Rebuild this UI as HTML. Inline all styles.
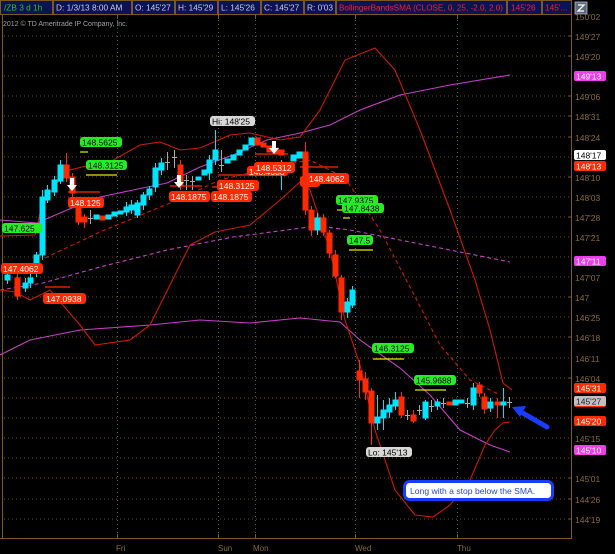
<!DOCTYPE html>
<html><head><meta charset="utf-8"><style>
html,body{margin:0;padding:0;background:#000;width:615px;height:554px;overflow:hidden}
svg{display:block}
text{font-family:"Liberation Sans",sans-serif}
</style></head><body>
<svg width="615" height="554" viewBox="0 0 615 554" xmlns="http://www.w3.org/2000/svg">
<rect width="615" height="554" fill="#000"/>
<g font-size="8.3" fill="#c8cce0">
<rect x="0.5" y="0.5" width="52" height="14" fill="#0b1256" stroke="#7a5a20"/>
<text x="4" y="10.5" fill="#1ec81e">/ZB 3 d 1h</text>
<rect x="53.5" y="0.5" width="78" height="14" fill="#0b1256" stroke="#7a5a20"/>
<text x="56" y="10.5">D: 1/3/13 8:00 AM</text>
<rect x="132.5" y="0.5" width="42" height="14" fill="#0b1256" stroke="#7a5a20"/>
<text x="135" y="10.5">O: 145'27</text>
<rect x="175.5" y="0.5" width="42" height="14" fill="#0b1256" stroke="#7a5a20"/>
<text x="178" y="10.5">H: 145'29</text>
<rect x="218.5" y="0.5" width="42" height="14" fill="#0b1256" stroke="#7a5a20"/>
<text x="221" y="10.5">L: 145'26</text>
<rect x="261.5" y="0.5" width="42" height="14" fill="#0b1256" stroke="#7a5a20"/>
<text x="264" y="10.5">C: 145'27</text>
<rect x="304.5" y="0.5" width="31" height="14" fill="#0b1256" stroke="#7a5a20"/>
<text x="307" y="10.5">R: 0'03</text>
<rect x="336.5" y="0.5" width="170" height="14" fill="#0b1256" stroke="#7a5a20"/>
<text x="339" y="10.5" fill="#ff2020" font-size="8" textLength="164" lengthAdjust="spacingAndGlyphs">BollingerBandsSMA (CLOSE, 0, 25, -2.0, 2.0)</text>
<rect x="507.5" y="0.5" width="34" height="14" fill="#0b1256" stroke="#7a5a20"/>
<text x="511" y="10.5" fill="#ff2020">145'26</text>
<rect x="542.5" y="0.5" width="29" height="14" fill="#0b1256" stroke="#7a5a20"/>
<text x="545" y="10.5" fill="#ff2020">145'...</text>
</g>
<rect x="575" y="2" width="12" height="12" fill="#5a6a7a" stroke="#aabbcc" stroke-width="0.8"/>
<path d="M578 5h6l-6 6h6" stroke="#fff" fill="none" stroke-width="1.3"/>
<text x="3" y="26" font-size="7" fill="#a0a0a0">2012 © TD Ameritrade IP Company, Inc.</text>
<line x1="2.5" y1="15" x2="2.5" y2="538" stroke="#7a5a20"/>
<line x1="571.5" y1="15" x2="571.5" y2="538" stroke="#7a5a20"/>
<line x1="0" y1="538.5" x2="572" y2="538.5" stroke="#7a5a20"/>
<g stroke="#6a5020" stroke-dasharray="1 3">
<line x1="4" y1="36" x2="570" y2="36"/><line x1="4" y1="56" x2="570" y2="56"/><line x1="4" y1="76" x2="570" y2="76"/><line x1="4" y1="96" x2="570" y2="96"/><line x1="4" y1="116" x2="570" y2="116"/><line x1="4" y1="137" x2="570" y2="137"/><line x1="4" y1="157" x2="570" y2="157"/><line x1="4" y1="177" x2="570" y2="177"/><line x1="4" y1="197" x2="570" y2="197"/><line x1="4" y1="217" x2="570" y2="217"/><line x1="4" y1="237" x2="570" y2="237"/><line x1="4" y1="257" x2="570" y2="257"/><line x1="4" y1="277" x2="570" y2="277"/><line x1="4" y1="297" x2="570" y2="297"/><line x1="4" y1="317" x2="570" y2="317"/><line x1="4" y1="337" x2="570" y2="337"/><line x1="4" y1="358" x2="570" y2="358"/><line x1="4" y1="378" x2="570" y2="378"/><line x1="4" y1="398" x2="570" y2="398"/><line x1="4" y1="418" x2="570" y2="418"/><line x1="4" y1="438" x2="570" y2="438"/><line x1="4" y1="458" x2="570" y2="458"/><line x1="4" y1="478" x2="570" y2="478"/><line x1="4" y1="499" x2="570" y2="499"/><line x1="4" y1="519" x2="570" y2="519"/>
</g>
<g stroke="#5a5a5a" stroke-dasharray="1 3">
<line x1="117.5" y1="16" x2="117.5" y2="538"/><line x1="218.5" y1="16" x2="218.5" y2="538"/><line x1="255.5" y1="16" x2="255.5" y2="538"/><line x1="355.5" y1="16" x2="355.5" y2="538"/><line x1="457.5" y1="16" x2="457.5" y2="538"/>
</g>
<g stroke="#7a5a20"><line x1="117.5" y1="15" x2="117.5" y2="19"/><line x1="218.5" y1="15" x2="218.5" y2="19"/><line x1="255.5" y1="15" x2="255.5" y2="19"/><line x1="355.5" y1="15" x2="355.5" y2="19"/><line x1="457.5" y1="15" x2="457.5" y2="19"/>
<line x1="117.5" y1="534" x2="117.5" y2="538"/><line x1="218.5" y1="534" x2="218.5" y2="538"/><line x1="255.5" y1="534" x2="255.5" y2="538"/><line x1="355.5" y1="534" x2="355.5" y2="538"/><line x1="457.5" y1="534" x2="457.5" y2="538"/></g>
<g font-size="8" fill="#8a6a30">
<text x="116" y="551">Fri</text><text x="218" y="551">Sun</text><text x="253" y="551">Mon</text><text x="355" y="551">Wed</text><text x="457" y="551">Thu</text>
</g>
<g font-size="8.5" fill="#8a6a30">
<text x="575" y="20">150'02</text><text x="575" y="40">149'27</text><text x="575" y="60">149'20</text><text x="575" y="100">149'06</text><text x="575" y="120">148'31</text><text x="575" y="141">148'24</text><text x="575" y="181">148'10</text><text x="575" y="201">148'03</text><text x="575" y="221">147'28</text><text x="575" y="241">147'21</text><text x="575" y="281">147'07</text><text x="575" y="301">147</text><text x="575" y="321">146'25</text><text x="575" y="341">146'18</text><text x="575" y="362">146'11</text><text x="575" y="382">146'04</text><text x="575" y="442">145'15</text><text x="575" y="482">145'01</text><text x="575" y="503">144'26</text><text x="575" y="523">144'19</text>
</g>
<g stroke="#7a5a20"><line x1="568" y1="36" x2="572" y2="36"/><line x1="568" y1="56" x2="572" y2="56"/><line x1="568" y1="96" x2="572" y2="96"/><line x1="568" y1="116" x2="572" y2="116"/><line x1="568" y1="137" x2="572" y2="137"/><line x1="568" y1="177" x2="572" y2="177"/><line x1="568" y1="217" x2="572" y2="217"/><line x1="568" y1="297" x2="572" y2="297"/><line x1="568" y1="337" x2="572" y2="337"/><line x1="568" y1="378" x2="572" y2="378"/><line x1="568" y1="478" x2="572" y2="478"/><line x1="568" y1="499" x2="572" y2="499"/><line x1="568" y1="519" x2="572" y2="519"/></g>
<g font-size="8.5">
<rect x="574" y="71" width="32" height="10" rx="2" fill="#f03cf0"/><text x="576" y="79.5" fill="#fff">149'13</text>
<rect x="574" y="150" width="32" height="10" rx="2" fill="#fff"/><text x="576" y="158.5" fill="#000">148'17</text>
<rect x="574" y="161" width="32" height="10" rx="2" fill="#ff2a00"/><text x="576" y="169.5" fill="#fff">148'13</text>
<rect x="574" y="256" width="32" height="10" rx="2" fill="#f03cf0"/><text x="576" y="264.5" fill="#fff">147'11</text>
<rect x="574" y="383" width="32" height="10" rx="2" fill="#ff2a00"/><text x="576" y="391.5" fill="#fff">145'31</text>
<rect x="574" y="396" width="32" height="11" rx="2" fill="#ff2a00"/><rect x="574" y="396" width="32" height="10" rx="2" fill="#c0c0c0"/><text x="576" y="404.5" fill="#222">145'27</text>
<rect x="574" y="416" width="32" height="10" rx="2" fill="#ff2a00"/><text x="576" y="424.5" fill="#fff">145'20</text>
<rect x="574" y="445" width="32" height="10" rx="2" fill="#f03cf0"/><text x="576" y="453.5" fill="#fff">145'10</text>
</g>
<g fill="none" stroke-width="1.1">
<polyline stroke="#c83cc8" points="0,220 37,223 67,210 100,197 133,190 167,183 200,167 233,155 267,140 300,133 330,125 360,110 400,95 450,85 510,75"/>
<polyline stroke="#c83cc8" points="0,355 30,340 80,330 150,325 200,320 250,323 300,318 340,322 360,340 400,368 430,395 460,430 490,445 510,452"/>
<polyline stroke="#c83cc8" stroke-dasharray="4 3" points="0,290 43,283 100,267 167,250 233,237 317,226 350,230 400,240 450,250 510,262"/>
<polyline stroke="#d01800" points="0,236 35,235 42,205 55,185 70,170 90,165 110,162 140,145 160,142 180,150 200,148 230,135 250,133 280,140 300,137 320,110 345,60 375,48 395,70 420,130 450,210 475,280 490,330 503,383 512,390"/>
<polyline stroke="#d01800" points="0,290 15,292 30,300 50,290 80,325 95,345 130,340 150,325 170,285 190,245 215,232 250,225 280,200 300,182 310,190 330,250 345,320 360,365 375,430 395,490 415,515 433,517 450,505 470,480 485,445 495,430 503,423 510,422"/>
<polyline stroke="#d01800" stroke-dasharray="4 3" points="45,258 100,232 170,203 220,180 280,165 310,160 345,178 380,230 410,287 440,345 470,380 500,395"/>
</g>
<g stroke-width="1">
<g stroke="#00e5ff" fill="#00e5ff">
<line x1="7.5" y1="270" x2="7.5" y2="284"/><rect x="5" y="275" width="5" height="5"/>
<line x1="25.5" y1="278" x2="25.5" y2="292"/><rect x="23" y="283" width="5" height="5"/>
<line x1="30.5" y1="274" x2="30.5" y2="288"/><rect x="28" y="278" width="5" height="5"/>
<line x1="36.5" y1="252" x2="36.5" y2="277"/><rect x="34" y="255" width="5" height="18"/>
<line x1="42.5" y1="190" x2="42.5" y2="260"/><rect x="40" y="197" width="5" height="58"/>
<line x1="47.5" y1="185" x2="47.5" y2="203"/><rect x="45" y="190" width="5" height="10"/>
<line x1="54.5" y1="176" x2="54.5" y2="196"/><rect x="52" y="180" width="5" height="12"/>
<line x1="60.5" y1="160" x2="60.5" y2="184"/><rect x="58" y="165" width="5" height="16"/>
<rect x="94" y="215" width="5" height="4"/><rect x="106" y="215" width="5" height="4"/><rect x="112" y="212" width="5" height="4"/><rect x="118" y="211" width="5" height="3"/>
<line x1="126.5" y1="202" x2="126.5" y2="216"/><rect x="124" y="207" width="5" height="5"/>
<line x1="131.5" y1="200" x2="131.5" y2="214"/><rect x="129" y="205" width="5" height="5"/>
<line x1="137.5" y1="200" x2="137.5" y2="218"/><rect x="135" y="203" width="5" height="12"/>
<line x1="143.5" y1="192" x2="143.5" y2="210"/><rect x="141" y="195" width="5" height="10"/>
<line x1="149.5" y1="186" x2="149.5" y2="200"/><rect x="147" y="189" width="5" height="6"/>
<line x1="155.5" y1="163" x2="155.5" y2="192"/><rect x="153" y="168" width="5" height="19"/>
<line x1="161.5" y1="158" x2="161.5" y2="175"/><rect x="159" y="163" width="5" height="7"/>
<rect x="196" y="177" width="5" height="3"/><rect x="202" y="170" width="5" height="5"/>
<line x1="209.5" y1="155" x2="209.5" y2="180"/><rect x="207" y="160" width="5" height="13"/>
<line x1="215.5" y1="130" x2="215.5" y2="165"/><rect x="213" y="150" width="5" height="10"/>
<rect x="225" y="159" width="5" height="4"/><rect x="231" y="155" width="5" height="5"/><rect x="237" y="150" width="5" height="5"/><rect x="243" y="145" width="5" height="5"/><rect x="249" y="138" width="5" height="7"/>
<line x1="281.5" y1="160" x2="281.5" y2="190"/>
<rect x="291" y="155" width="5" height="6"/><rect x="297" y="152" width="5" height="6"/>
<line x1="317.5" y1="213" x2="317.5" y2="235"/><rect x="315" y="218" width="5" height="12"/>
<line x1="347.5" y1="298" x2="347.5" y2="318"/><rect x="345" y="302" width="5" height="10"/>
<line x1="352.5" y1="286" x2="352.5" y2="308"/><rect x="350" y="290" width="5" height="15"/>
<line x1="377.5" y1="395" x2="377.5" y2="430"/><rect x="375" y="417" width="5" height="6"/>
<line x1="383.5" y1="400" x2="383.5" y2="430"/><rect x="381" y="410" width="5" height="8"/>
<line x1="389.5" y1="398" x2="389.5" y2="418"/><rect x="387" y="405" width="5" height="7"/>
<line x1="395.5" y1="392" x2="395.5" y2="410"/><rect x="393" y="400" width="5" height="6"/>
<line x1="425.5" y1="400" x2="425.5" y2="420"/><rect x="423" y="402" width="5" height="16"/>
<line x1="437.5" y1="399" x2="437.5" y2="410"/><rect x="435" y="402" width="5" height="4"/>
<rect x="453" y="400" width="5" height="5"/><rect x="459" y="400" width="5" height="3"/>
<line x1="473.5" y1="383" x2="473.5" y2="410"/><rect x="471" y="388" width="5" height="17"/>
<line x1="490.5" y1="398" x2="490.5" y2="412"/><rect x="488" y="402" width="5" height="6"/>
<line x1="503.5" y1="388" x2="503.5" y2="418"/><rect x="501" y="402" width="5" height="3"/>
</g>
<g stroke="#ff2a00" fill="#ff2a00">
<line x1="17.5" y1="274" x2="17.5" y2="300"/><rect x="15" y="278" width="5" height="18"/>
<line x1="66.5" y1="153" x2="66.5" y2="182"/><rect x="64" y="165" width="5" height="13"/>
<line x1="72.5" y1="173" x2="72.5" y2="198"/><rect x="70" y="177" width="5" height="16"/>
<line x1="78.5" y1="205" x2="78.5" y2="225"/><rect x="76" y="208" width="5" height="14"/>
<line x1="84.5" y1="214" x2="84.5" y2="228"/><rect x="82" y="217" width="5" height="5"/>
<rect x="100" y="216" width="5" height="4"/>
<line x1="180.5" y1="160" x2="180.5" y2="190"/><rect x="178" y="165" width="5" height="20"/>
<rect x="255" y="138" width="5" height="7"/><rect x="261" y="143" width="5" height="4"/><rect x="267" y="146" width="5" height="6"/><rect x="273" y="148" width="5" height="6"/><rect x="279" y="150" width="5" height="5"/>
<line x1="305.5" y1="142" x2="305.5" y2="215"/><rect x="303" y="152" width="5" height="58"/>
<line x1="311.5" y1="206" x2="311.5" y2="236"/><rect x="309" y="210" width="5" height="20"/>
<line x1="323.5" y1="214" x2="323.5" y2="236"/><rect x="321" y="218" width="5" height="14"/>
<line x1="329.5" y1="230" x2="329.5" y2="258"/><rect x="327" y="233" width="5" height="20"/>
<line x1="335.5" y1="250" x2="335.5" y2="278"/><rect x="333" y="255" width="5" height="21"/>
<line x1="341.5" y1="275" x2="341.5" y2="320"/><rect x="339" y="278" width="5" height="34"/>
<line x1="359.5" y1="360" x2="359.5" y2="398"/><rect x="357" y="371" width="5" height="9"/>
<line x1="365.5" y1="372" x2="365.5" y2="400"/><rect x="363" y="379" width="5" height="13"/>
<line x1="371.5" y1="388" x2="371.5" y2="445"/><rect x="369" y="391" width="5" height="32"/>
<line x1="401.5" y1="392" x2="401.5" y2="418"/><rect x="399" y="397" width="5" height="18"/>
<line x1="413.5" y1="410" x2="413.5" y2="423"/><rect x="411" y="415" width="5" height="6"/>
<rect x="447" y="402" width="5" height="3"/>
<line x1="479.5" y1="382" x2="479.5" y2="397"/><rect x="477" y="385" width="5" height="8"/>
<line x1="484.5" y1="393" x2="484.5" y2="414"/><rect x="482" y="397" width="5" height="12"/>
<line x1="497.5" y1="398" x2="497.5" y2="418"/><rect x="495" y="402" width="5" height="3"/>
</g>
<g stroke="#aaa" fill="#aaa">
<line x1="90.5" y1="210" x2="90.5" y2="224"/><line x1="88" y1="218.5" x2="93" y2="218.5"/>
<line x1="167.5" y1="152" x2="167.5" y2="170"/><line x1="165" y1="162.5" x2="170" y2="162.5"/>
<line x1="174.5" y1="150" x2="174.5" y2="168"/><line x1="172" y1="157.5" x2="177" y2="157.5"/>
<line x1="186.5" y1="175" x2="186.5" y2="190"/><line x1="184" y1="180.5" x2="189" y2="180.5"/>
<line x1="192.5" y1="176" x2="192.5" y2="190"/><line x1="190" y1="181.5" x2="195" y2="181.5"/>
<line x1="221.5" y1="150" x2="221.5" y2="172"/><line x1="219" y1="165.5" x2="224" y2="165.5"/>
<line x1="407.5" y1="410" x2="407.5" y2="420"/><line x1="405" y1="415.5" x2="410" y2="415.5"/>
<line x1="419.5" y1="405" x2="419.5" y2="415"/><line x1="417" y1="410.5" x2="422" y2="410.5"/>
<line x1="431.5" y1="400" x2="431.5" y2="412"/><line x1="429" y1="406.5" x2="434" y2="406.5"/>
<line x1="443.5" y1="398" x2="443.5" y2="408"/><line x1="441" y1="403.5" x2="446" y2="403.5"/>
<line x1="467.5" y1="398" x2="467.5" y2="408"/><line x1="465" y1="403.5" x2="470" y2="403.5"/>
<line x1="509.5" y1="397" x2="509.5" y2="408"/><line x1="507" y1="402.5" x2="512" y2="402.5"/>
</g>
</g>
<g stroke="#ff2a00" stroke-width="1.2">
<line x1="68" y1="192" x2="100" y2="192"/><line x1="45" y1="287" x2="70" y2="287"/><line x1="170" y1="186" x2="202" y2="186"/><line x1="212" y1="187" x2="243" y2="187"/><line x1="218" y1="175" x2="250" y2="175"/><line x1="255" y1="154" x2="288" y2="154"/><line x1="300" y1="167" x2="338" y2="167"/>
</g>
<g stroke="#e8e800" stroke-width="1.2">
<line x1="80" y1="152" x2="88" y2="152"/><line x1="86" y1="175" x2="117" y2="175"/><line x1="337" y1="210" x2="352" y2="210"/><line x1="343" y1="218" x2="350" y2="218"/><line x1="349" y1="250" x2="373" y2="250"/><line x1="373" y1="359" x2="404" y2="359"/><line x1="415" y1="390" x2="446" y2="390"/>
</g>
<g fill="#fff">
<path d="M70 178h4v7h3l-5 6-5-6h3z"/><path d="M177 175h4v7h3l-5 6-5-6h3z"/><path d="M272 141h4v7h3l-5 6-5-6h3z"/>
</g>
<g font-size="8.5" fill="#fff">
<rect x="68" y="197" width="36" height="11" rx="3" fill="#ff2a00"/><text x="70" y="206">148.125</text>
<rect x="1" y="263" width="42" height="11" rx="3" fill="#ff2a00"/><text x="3" y="272">147.4062</text>
<rect x="43" y="293" width="43" height="11" rx="3" fill="#ff2a00"/><text x="46" y="302">147.0938</text>
<rect x="169" y="191" width="41" height="11" rx="3" fill="#ff2a00"/><text x="171" y="200">148.1875</text>
<rect x="211" y="191" width="41" height="11" rx="3" fill="#ff2a00"/><text x="213" y="200">148.1875</text>
<rect x="217" y="180" width="42" height="11" rx="3" fill="#ff2a00"/><text x="219" y="189">148.3125</text>
<rect x="247" y="166" width="41" height="10" rx="3" fill="#ff2a00"/><text x="249" y="175">148.4688</text>
<rect x="254" y="162" width="41" height="11" rx="3" fill="#ff2a00"/><text x="256" y="171">148.5312</text>
<rect x="300" y="176" width="20" height="11" rx="3" fill="#ff2a00"/>
<rect x="306" y="173" width="43" height="11" rx="3" fill="#ff2a00"/><text x="309" y="182">148.4062</text>
<g fill="#000">
<rect x="80" y="137" width="42" height="10" rx="3" fill="#22ee22"/><text x="82" y="145.5">148.5625</text>
<rect x="86" y="160" width="41" height="10" rx="3" fill="#22ee22"/><text x="88" y="168.5">148.3125</text>
<rect x="2" y="223" width="40" height="10" rx="3" fill="#22ee22"/><text x="4" y="231.5">147.625</text>
<rect x="336" y="195" width="42" height="10" rx="3" fill="#22ee22"/><text x="338" y="203.5">147.9375</text>
<rect x="342" y="203" width="42" height="10" rx="3" fill="#22ee22"/><text x="344" y="211.5">147.8438</text>
<rect x="347" y="235" width="26" height="10" rx="3" fill="#22ee22"/><text x="349" y="243.5">147.5</text>
<rect x="372" y="343" width="42" height="10" rx="3" fill="#22ee22"/><text x="374" y="351.5">146.3125</text>
<rect x="414" y="375" width="42" height="10" rx="3" fill="#22ee22"/><text x="416" y="383.5">145.9688</text>
<rect x="210" y="116" width="45" height="10" rx="3" fill="#d8d8d8"/><text x="212" y="124.5">Hi: 148'25</text>
<rect x="366" y="447" width="46" height="10" rx="3" fill="#d8d8d8"/><text x="368" y="455.5">Lo: 145'13</text>
</g>
</g>
<rect x="404.5" y="481.5" width="148" height="18" rx="5" fill="#fff" stroke="#1a3cff" stroke-width="3"/>
<text x="410" y="494" font-size="8.6" fill="#2a48d0">Long with a stop below the SMA.</text>
<line x1="547" y1="427" x2="521" y2="412" stroke="#1a3cff" stroke-width="5" stroke-linecap="round"/>
<path d="M512 407l14-1-6 11z" fill="#1a3cff"/>
</svg>
</body></html>
